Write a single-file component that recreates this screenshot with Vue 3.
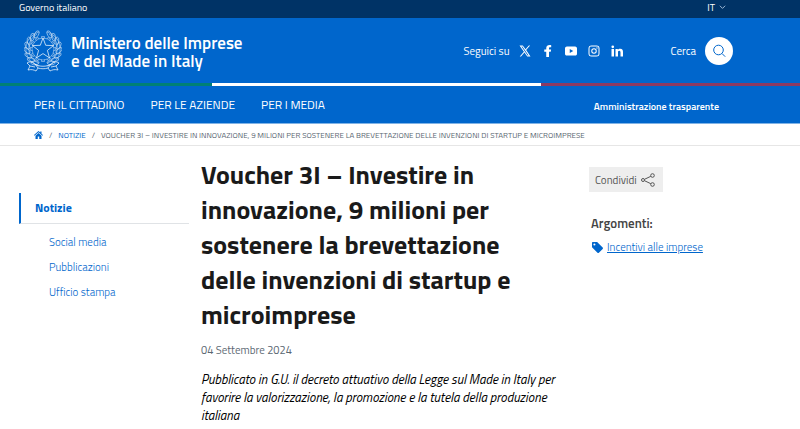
<script setup>
import { ref } from "vue";

const navLinks = ["PER IL CITTADINO", "PER LE AZIENDE", "PER I MEDIA"];
const sideLinks = ["Social media", "Pubblicazioni", "Ufficio stampa"];

const socials = [
  {
    name: "X",
    path: "M14.3 10.2 22.2 1h-2.500l-6.600 7.500L7.500 1H1l8.800 12.300L1.500 23h2.500l7-8 5.500 8H23l-8.700-12.800ZM4.800 3h1.900l12.500 18h-1.900L4.800 3Z",
  },
  {
    name: "Facebook",
    path: "M8.500 24V13.500H4.500V9h4V6.200C8.500 2.300 11.300 0 15 0c1.700 0 3.400.300 3.400.300v4h-2c-1.900 0-2.400 1.100-2.400 2.300V9h4.200l-.700 4.500H14V24H8.500Z",
  },
  {
    name: "YouTube",
    path: "M4 3h16c3 0 4 2 4 4v10c0 3-1 4-4 4H4c-3 0-4-1-4-4V7c0-2 1-4 4-4Zm5.500 5v8l7-4-7-4Z",
  },
  {
    name: "Instagram",
    path: "M7 1h10c4 0 6 2 6 6v10c0 4-2 6-6 6H7c-4 0-6-2-6-6V7c0-4 2-6 6-6Zm0 2C4 3 3 4 3 7v10c0 3 1 4 4 4h10c3 0 4-1 4-4V7c0-3-1-4-4-4H7Zm5 3.500a5.500 5.500 0 1 1 0 11 5.500 5.500 0 0 1 0-11Zm0 2a3.500 3.500 0 1 0 0 7 3.500 3.500 0 0 0 0-7ZM18 4.700a1.300 1.300 0 1 1 0 2.600 1.300 1.300 0 0 1 0-2.600Z",
  },
  {
    name: "LinkedIn",
    path: "M1 8h5v15H1V8Zm2.500-7a2.700 2.700 0 1 1 0 5.400 2.700 2.700 0 0 1 0-5.400ZM9 8h4.700v2c.700-1.300 2.400-2.400 4.700-2.400 4.600 0 5.600 3 5.600 7V23h-5v-7.500c0-2 0-4-2.500-4S14 13.400 14 15.400V23H9V8Z",
  },
];

// one leaf every few degrees on each side of the wreath
const leaves = [-150, -132, -114, -96, -78, -60, -42, -24, 24, 42, 60, 78, 96, 114, 132, 150];
const cogs = [0, 30, 60, 90, 120, 150, 180, 210, 240, 270, 300, 330];

const lang = ref("IT");
</script>

<template>
  <div class="page">
    <header>
      <div class="topbar">
        <a href="#">Governo italiano</a>
        <button type="button" class="lang">
          {{ lang }}
          <svg viewBox="0 0 8 8" width="7" height="7"><path d="m1 2 3 3 3-3" /></svg>
        </button>
      </div>

      <div class="brandbar">
        <a href="#" class="brand">
          <svg class="emblem" viewBox="0 0 38 44" aria-hidden="true">
            <g class="wreath">
              <ellipse
                v-for="angle in leaves"
                :key="angle"
                cx="19"
                cy="4"
                rx="4"
                ry="2"
                :transform="`rotate(${angle} 19 20) rotate(${angle > 0 ? 35 : -35} 19 4)`"
              />
              <path d="M15 3C6 6 1 13 2 22c1 8 6 13 13 15M23 3c9 3 14 10 13 19-1 8-6 13-13 15" />
              <path d="M13 5C7 9 4 14 5 21c0 6 4 11 10 13M25 5c6 4 9 9 8 16 0 6-4 11-10 13" />
            </g>
            <g class="gear">
              <circle cx="19" cy="20" r="11" />
              <path
                v-for="angle in cogs"
                :key="angle"
                d="M17.500 9.500V7.500h3v2"
                :transform="`rotate(${angle} 19 20)`"
              />
            </g>
            <path
              class="star"
              d="m19 9 2.700 7.300 7.800.300-6.100 4.800 2.100 7.500-6.500-4.300-6.500 4.300 2.100-7.500-6.100-4.800 7.800-.300Z"
            />
            <path
              class="ribbon"
              d="M3 34c3-2 6-1 8 1 4 3 12 3 16 0 2-2 5-3 8-1l-3 3 2 4c-4-1-6 0-8 1l-2-3c-3 1-7 1-10 0l-2 3c-2-1-4-2-8-1l2-4-3-3ZM6 37l5 1M27 38l5-1M11 35l3 4M27 35l-3 4"
            />
          </svg>
          <span>Ministero delle Imprese<br />e del Made in Italy</span>
        </a>

        <div class="tools">
          <div class="follow">
            <span>Seguici su</span>
            <a v-for="item in socials" :key="item.name" href="#" :aria-label="item.name">
              <svg viewBox="0 0 24 24" width="12" height="12"><path fill-rule="evenodd" :d="item.path" /></svg>
            </a>
          </div>
          <div class="search">
            <span id="search-label">Cerca</span>
            <button type="button" aria-labelledby="search-label">
              <svg viewBox="0 0 14 14" width="14" height="14">
                <circle cx="6.500" cy="6" r="4.800" />
                <path d="m10 9.500 3.200 3.200" />
              </svg>
            </button>
          </div>
        </div>
      </div>

      <div class="flag"><i class="green"></i><i class="white"></i><i class="red"></i></div>

      <nav class="navbar">
        <div class="nav-main">
          <a v-for="link in navLinks" :key="link" href="#">{{ link }}</a>
        </div>
        <a href="#" class="nav-side">Amministrazione trasparente</a>
      </nav>
    </header>

    <nav class="breadcrumb" aria-label="Breadcrumb">
      <a href="#" aria-label="Home">
        <svg viewBox="0 0 18 16" width="9" height="8">
          <path d="M9 0 0 8l1 1.500 8-7 8 7L18 8l-3-2.700V1h-2.500v2L9 0Zm0 4-6 5.300V16h4.500v-5h3v5H15V9.300L9 4Z" />
        </svg>
      </a>
      <span>/</span>
      <a href="#">NOTIZIE</a>
      <span>/</span>
      <span>VOUCHER 3I – INVESTIRE IN INNOVAZIONE, 9 MILIONI PER SOSTENERE LA BREVETTAZIONE DELLE INVENZIONI DI STARTUP E MICROIMPRESE</span>
    </nav>

    <div class="content">
      <aside class="sidebar">
        <a href="#" class="current">Notizie</a>
        <ul>
          <li v-for="link in sideLinks" :key="link"><a href="#">{{ link }}</a></li>
        </ul>
      </aside>

      <main>
        <h1>Voucher 3I – Investire in innovazione, 9 milioni per sostenere la brevettazione delle invenzioni di startup e microimprese</h1>
        <time datetime="2024-09-04">04 Settembre 2024</time>
        <p>Pubblicato in G.U. il decreto attuativo della Legge sul Made in Italy per favorire la valorizzazione, la promozione e la tutela della produzione italiana</p>
      </main>

      <aside class="related">
        <button type="button" class="share">
          Condividi
          <svg viewBox="0 0 14 14" width="14" height="14">
            <circle cx="2" cy="7" r="1.500" />
            <circle cx="11.500" cy="2.500" r="1.800" />
            <circle cx="11.500" cy="11.500" r="1.800" />
            <path d="m3.500 6.300 6.300-3M3.500 7.700l6.300 3" />
          </svg>
        </button>
        <h2>Argomenti:</h2>
        <a href="#" class="topic">
          <svg viewBox="0 0 16 16" width="11" height="11">
            <path fill-rule="evenodd" d="M1 0h6.500l8 8c.700.700.700 1.300 0 2L10 15.500c-.700.700-1.300.700-2 0l-8-8V1c0-.600.400-1 1-1Zm2.500 2a1.500 1.500 0 1 0 0 3 1.500 1.500 0 0 0 0-3Z" />
          </svg>
          <span>Incentivi alle imprese</span>
        </a>
      </aside>
    </div>
  </div>
</template>

<style>
body {
  background: #fff;
}
</style>

<style scoped>
.page {
  font-family: "Titillium Web", Lato, sans-serif;
  font-size: 11px;
  color: #1a1a1a;
}

a {
  color: #0066cc;
  text-decoration: none;
}

button {
  font: inherit;
  border: 0;
  padding: 0;
  cursor: pointer;
}

svg {
  display: block;
  flex: none;
}

header,
header a {
  color: #fff;
}

.topbar {
  display: flex;
  justify-content: space-between;
  align-items: center;
  height: 18px;
  padding: 0 74px 4px 19px;
  box-sizing: border-box;
  background: #003366;
  font-size: 10px;
}

.lang {
  display: flex;
  align-items: center;
  gap: 4px;
  background: none;
  color: #fff;
}

.lang svg {
  fill: none;
  stroke: #b3cce6;
}

.brandbar {
  display: flex;
  justify-content: space-between;
  align-items: center;
  height: 65px;
  padding: 0 67px 0 24px;
  background: #0066cc;
}

.brand {
  display: flex;
  align-items: center;
  gap: 9px;
  font-size: 17px;
  line-height: 18px;
  font-weight: 600;
}

.brand span {
  padding-top: 2px;
}

.emblem {
  width: 38px;
  height: 44px;
  fill: none;
  stroke: #fff;
}

.wreath {
  stroke-width: 0.6;
  opacity: 0.8;
}

.gear {
  stroke-width: 0.6;
  opacity: 0.7;
}

.star {
  stroke-width: 0.9;
  opacity: 0.8;
}

.ribbon {
  stroke-width: 0.8;
  opacity: 0.9;
}

.tools,
.follow,
.search {
  display: flex;
  align-items: center;
}

.tools {
  gap: 48px;
}

.follow {
  gap: 11px;
}

.follow > span {
  margin-right: -2px;
}

.follow svg {
  fill: #fff;
}

.search {
  gap: 9px;
}

.search button {
  display: grid;
  place-items: center;
  width: 28px;
  height: 28px;
  border-radius: 50%;
  background: #fff;
}

.search svg {
  fill: none;
  stroke: #0066cc;
}

.flag {
  display: flex;
  height: 3px;
}

.green {
  flex: 212;
  background: #008075;
}

.white {
  flex: 329;
  background: #fff;
}

.red {
  flex: 259;
  background: #8c3a62;
}

.navbar {
  display: flex;
  justify-content: space-between;
  align-items: center;
  height: 37px;
  padding: 0 81px 0 34px;
  background: #0066cc;
  border-bottom: 1px solid #80b3e6;
}

.nav-main {
  display: flex;
  gap: 26px;
  font-size: 12px;
}

.nav-side {
  padding-top: 3px;
  font-size: 10px;
  font-weight: 600;
}

.breadcrumb {
  display: flex;
  align-items: center;
  gap: 6px;
  height: 21px;
  padding: 0 34px;
  border-bottom: 1px solid #e6e6e6;
  font-size: 8px;
  white-space: nowrap;
  color: #5a6772;
}

.breadcrumb svg,
.topic svg {
  fill: #0066cc;
}

.content {
  display: grid;
  grid-template-columns: 170px minmax(0, 1fr) 192px;
  padding: 11px 19px 0;
}

.sidebar {
  padding-top: 36px;
}

.current {
  display: block;
  padding-left: 14px;
  border-left: 2px solid #0066cc;
  border-bottom: 1px solid #e0e3e6;
  font-size: 12px;
  font-weight: 700;
  line-height: 30px;
}

.sidebar ul {
  margin: 0;
  padding: 6px 0 0 30px;
  list-style: none;
  line-height: 25px;
}

.sidebar li,
.topic {
  font-weight: 300;
}

main {
  padding: 0 32px 0 12px;
}

h1 {
  margin: 0;
  font-size: 26px;
  line-height: 35px;
  font-weight: 700;
}

time {
  display: block;
  margin-top: 9px;
  line-height: 18px;
  color: #5a6772;
}

p {
  margin: 11px 0 0;
  font-size: 13px;
  line-height: 18px;
  font-style: italic;
  font-weight: 400;
  color: #000;
}

.related {
  padding-top: 10px;
}

.share {
  display: flex;
  align-items: center;
  gap: 4px;
  height: 25px;
  padding: 0 8px 0 6px;
  background: #eee;
  color: #555;
}

.share svg {
  fill: none;
  stroke: #555;
}

h2 {
  margin: 22px 0 0 2px;
  font-size: 13px;
  line-height: 18px;
  font-weight: 600;
  color: #444;
}

.topic {
  display: flex;
  align-items: center;
  gap: 4px;
  margin: 6px 0 0 3px;
  line-height: 18px;
}

.topic span {
  text-decoration: underline;
}
</style>
